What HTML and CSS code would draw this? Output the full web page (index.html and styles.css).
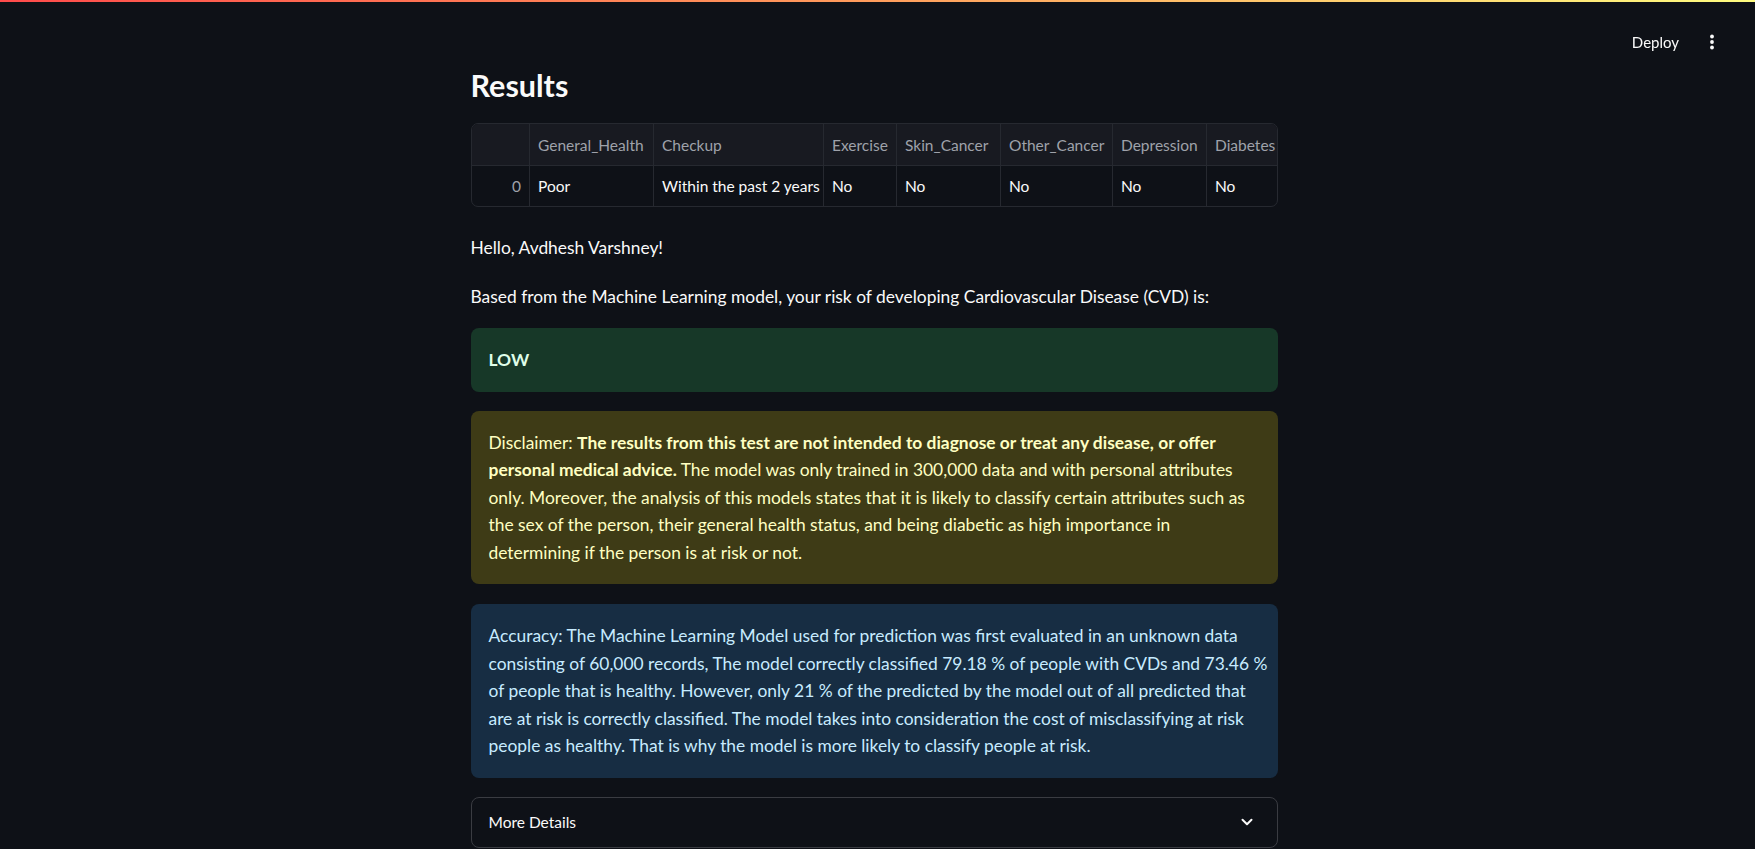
FILE: index.html
```html
<!DOCTYPE html>
<html lang="en">
<head>
<meta charset="utf-8">
<title>Results</title>
<link rel="stylesheet" href="styles.css">
</head>
<body>
<div class="decoration"></div>
<header class="toolbar">
  <span class="deploy">Deploy</span>
  <svg class="kebab" width="16" height="20" viewBox="0 0 16 20" aria-hidden="true">
    <circle cx="8" cy="4.5" r="1.9" fill="#fafafa"/>
    <circle cx="8" cy="10" r="1.9" fill="#fafafa"/>
    <circle cx="8" cy="15.5" r="1.9" fill="#fafafa"/>
  </svg>
</header>
<div class="app">
  <main class="block">
    <h1 class="title">Results</h1>

    <div class="frame">
      <table class="grid">
        <colgroup>
          <col class="c-idx"><col class="c-gh"><col class="c-chk"><col class="c-ex">
          <col class="c-skin"><col class="c-oth"><col class="c-dep"><col class="c-dia">
        </colgroup>
        <thead>
          <tr>
            <th class="idx"></th>
            <th>General_Health</th>
            <th>Checkup</th>
            <th>Exercise</th>
            <th>Skin_Cancer</th>
            <th>Other_Cancer</th>
            <th>Depression</th>
            <th>Diabetes</th>
          </tr>
        </thead>
        <tbody>
          <tr>
            <td class="idx">0</td>
            <td>Poor</td>
            <td>Within the past 2 years</td>
            <td>No</td>
            <td>No</td>
            <td>No</td>
            <td>No</td>
            <td>No</td>
          </tr>
        </tbody>
      </table>
    </div>

    <p class="text hello">Hello, Avdhesh Varshney!</p>
    <p class="text based">Based from the Machine Learning model, your risk of developing Cardiovascular Disease (CVD) is:</p>

    <div class="alert success"><strong>LOW</strong></div>

    <div class="alert warning">Disclaimer: <strong>The results from this test are not intended to diagnose or treat any disease, or offer personal medical advice.</strong> The model was only trained in 300,000 data and with personal attributes only. Moreover, the analysis of this models states that it is likely to classify certain attributes such as the sex of the person, their general health status, and being diabetic as high importance in determining if the person is at risk or not.</div>

    <div class="alert info">Accuracy: The Machine Learning Model used for prediction was first evaluated in an unknown data consisting of 60,000 records, The model correctly classified 79.18 % of people with CVDs and 73.46 % of people that is healthy. However, only 21 % of the predicted by the model out of all predicted that are at risk is correctly classified. The model takes into consideration the cost of misclassifying at risk people as healthy. That is why the model is more likely to classify people at risk.</div>

    <div class="expander">
      <div class="summary">
        <span>More Details</span>
        <svg class="chev" width="14" height="14" viewBox="0 0 14 14" aria-hidden="true">
          <path d="M2.5 4.8 L7 9.3 L11.5 4.8" fill="none" stroke="#fafafa" stroke-width="2" stroke-linecap="round" stroke-linejoin="round"/>
        </svg>
      </div>
      <div class="exp-body"></div>
    </div>
  </main>
</div>
</body>
</html>
```

FILE: styles.css
```css
html, body {
  margin: 0;
  padding: 0;
}

body {
  background: #0e1117;
  color: #fafafa;
  font-family: Lato, "Liberation Sans", sans-serif;
  font-size: 17.4px;
  letter-spacing: 0;
}

.decoration {
  height: 2px;
  background: linear-gradient(90deg, #ff4b4b 0%, #ff9d5c 50%, #fffd80 100%);
}

.toolbar {
  position: fixed;
  top: 2px;
  right: 0;
  height: 80px;
  display: flex;
  align-items: center;
  gap: 25px;
  padding-right: 35px;
}

.deploy {
  font-size: 15px;
  color: #fafafa;
}

.kebab {
  display: block;
}

.app {
  padding-right: 7px;
}

.block {
  width: 807px;
  margin: 0 auto;
  padding: 66px 0 120px;
  display: flex;
  flex-direction: column;
}

.title {
  margin: 0;
  font-size: 30.5px;
  line-height: 35px;
  font-weight: 700;
}

.frame {
  margin-top: 20px;
  border: 1px solid #262930;
  border-radius: 7px;
  overflow: hidden;
}

.grid {
  width: 100%;
  border-collapse: collapse;
  table-layout: fixed;
  font-size: 15.5px;
}

.c-idx { width: 58px; }
.c-gh { width: 124px; }
.c-chk { width: 170px; }
.c-ex { width: 73px; }
.c-skin { width: 104px; }
.c-oth { width: 112px; }
.c-dep { width: 94px; }
.c-dia { width: auto; }

.grid th,
.grid td {
  padding: 0 8px;
  text-align: left;
  white-space: nowrap;
  overflow: hidden;
  border-left: 1px solid #262930;
}

.grid th:first-child,
.grid td:first-child {
  border-left: none;
}

.grid th {
  height: 41px;
  background: #181a21;
  color: #9fa2aa;
  font-weight: 400;
  border-bottom: 1px solid #262930;
}

.grid td {
  height: 39px;
  padding-bottom: 1px;
  color: #fafafa;
}

.grid td.idx {
  text-align: right;
  color: #9fa2aa;
}

.text {
  margin: 0;
  line-height: 28px;
}

.hello {
  margin-top: 27px;
}

.based {
  margin-top: 21px;
}

.alert {
  margin-top: 17px;
  padding: 18px 10px 18px 18px;
  border-radius: 8px;
  line-height: 27.5px;
}

.alert strong {
  font-weight: 700;
}

.success {
  background: #173828;
  color: #dffde9;
}

.warning {
  margin-top: 19px;
  padding-right: 22px;
  background: #3e3b16;
  color: #ffffc2;
}

.info {
  margin-top: 20px;
  background: #172d43;
  color: #c7ebff;
}

.expander {
  margin-top: 19px;
  border: 1px solid #3a3c42;
  border-radius: 8px;
}

.summary {
  height: 49px;
  display: flex;
  align-items: center;
  justify-content: space-between;
  padding: 0 23px 0 17px;
  font-size: 15.5px;
}

.chev {
  display: block;
}

.exp-body {
  height: 0;
}
```
